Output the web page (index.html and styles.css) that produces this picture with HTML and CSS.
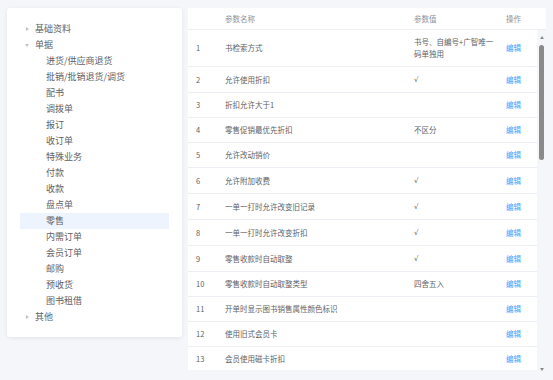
FILE: index.html
```html
<!DOCTYPE html>
<html lang="zh-CN">
<head>
<meta charset="utf-8">
<title>参数设置</title>
<link rel="stylesheet" href="styles.css">
</head>
<body>
<div class="page">
  <aside class="tree-card">
    <ul class="tree">
      <li class="node"><span class="arrow closed"></span><span class="label">基础资料</span></li>
      <li class="node"><span class="arrow open"></span><span class="label">单据</span></li>
      <li class="node child"><span class="arrow"></span><span class="label">进货/供应商退货</span></li>
      <li class="node child"><span class="arrow"></span><span class="label">批销/批销退货/调货</span></li>
      <li class="node child"><span class="arrow"></span><span class="label">配书</span></li>
      <li class="node child"><span class="arrow"></span><span class="label">调拨单</span></li>
      <li class="node child"><span class="arrow"></span><span class="label">报订</span></li>
      <li class="node child"><span class="arrow"></span><span class="label">收订单</span></li>
      <li class="node child"><span class="arrow"></span><span class="label">特殊业务</span></li>
      <li class="node child"><span class="arrow"></span><span class="label">付款</span></li>
      <li class="node child"><span class="arrow"></span><span class="label">收款</span></li>
      <li class="node child"><span class="arrow"></span><span class="label">盘点单</span></li>
      <li class="node child current"><span class="arrow"></span><span class="label">零售</span></li>
      <li class="node child"><span class="arrow"></span><span class="label">内需订单</span></li>
      <li class="node child"><span class="arrow"></span><span class="label">会员订单</span></li>
      <li class="node child"><span class="arrow"></span><span class="label">邮购</span></li>
      <li class="node child"><span class="arrow"></span><span class="label">预收货</span></li>
      <li class="node child"><span class="arrow"></span><span class="label">图书租借</span></li>
      <li class="node"><span class="arrow closed"></span><span class="label">其他</span></li>
    </ul>
  </aside>

  <section class="params">
    <table class="grid head">
      <colgroup><col class="c-idx"><col class="c-name"><col class="c-val"><col></colgroup>
      <thead>
        <tr><th></th><th>参数名称</th><th class="val">参数值</th><th class="op">操作</th></tr>
      </thead>
    </table>
    <div class="body-area">
      <div class="body-wrap">
        <table class="grid body">
          <colgroup><col class="c-idx"><col class="c-name"><col class="c-val"><col></colgroup>
          <tbody>
            <tr><td>1</td><td>书检索方式</td><td class="val">书号、自编号+广智唯一码单独用</td><td class="op"><a class="edit">编辑</a></td></tr>
            <tr><td>2</td><td>允许使用折扣</td><td class="val"><span class="check">√</span></td><td class="op"><a class="edit">编辑</a></td></tr>
            <tr><td>3</td><td>折扣允许大于1</td><td class="val"></td><td class="op"><a class="edit">编辑</a></td></tr>
            <tr><td>4</td><td>零售促销最优先折扣</td><td class="val">不区分</td><td class="op"><a class="edit">编辑</a></td></tr>
            <tr><td>5</td><td>允许改动销价</td><td class="val"></td><td class="op"><a class="edit">编辑</a></td></tr>
            <tr><td>6</td><td>允许附加收费</td><td class="val"><span class="check">√</span></td><td class="op"><a class="edit">编辑</a></td></tr>
            <tr><td>7</td><td>一单一打时允许改变旧记录</td><td class="val"><span class="check">√</span></td><td class="op"><a class="edit">编辑</a></td></tr>
            <tr><td>8</td><td>一单一打时允许改变折扣</td><td class="val"><span class="check">√</span></td><td class="op"><a class="edit">编辑</a></td></tr>
            <tr><td>9</td><td>零售收款时自动取整</td><td class="val"><span class="check">√</span></td><td class="op"><a class="edit">编辑</a></td></tr>
            <tr><td>10</td><td>零售收款时自动取整类型</td><td class="val">四舍五入</td><td class="op"><a class="edit">编辑</a></td></tr>
            <tr><td>11</td><td>开单时显示图书销售属性颜色标识</td><td class="val"></td><td class="op"><a class="edit">编辑</a></td></tr>
            <tr><td>12</td><td>使用旧式会员卡</td><td class="val"></td><td class="op"><a class="edit">编辑</a></td></tr>
            <tr><td>13</td><td>会员使用磁卡折扣</td><td class="val"></td><td class="op"><a class="edit">编辑</a></td></tr>
          </tbody>
        </table>
      </div>
      <div class="scrollbar" aria-hidden="true">
        <div class="sb-btn up"></div>
        <div class="sb-track"><div class="sb-thumb"></div></div>
        <div class="sb-btn down"></div>
      </div>
    </div>
  </section>
</div>
</body>
</html>
```

FILE: styles.css
```css
html, body {
  margin: 0;
  padding: 0;
}

body {
  background: #f4f6f9;
  font-family: "Noto Sans CJK SC", "Noto Sans", sans-serif;
  color: #606266;
}

.page {
  display: flex;
  align-items: flex-start;
  gap: 6px;
  padding: 8px 7px 0 7px;
  height: 380px;
  box-sizing: border-box;
}

/* ---------- tree ---------- */
.tree-card {
  flex: none;
  width: 175px;
  box-sizing: border-box;
  background: #fff;
  border-radius: 3px;
  box-shadow: 0 1px 4px rgba(0, 0, 0, 0.08);
  padding: 13px 13px 12px;
}

.tree {
  list-style: none;
  margin: 0;
  padding: 0;
}

.node {
  display: flex;
  align-items: center;
  height: 16px;
  font-size: 9px;
  line-height: 16px;
  color: #606266;
  white-space: nowrap;
}

.node.child {
  padding-left: 11px;
}

.node.current {
  background: #edf4fd;
}

.arrow {
  flex: none;
  width: 15px;
  height: 16px;
  position: relative;
}

.arrow.closed::before,
.arrow.open::before {
  content: "";
  position: absolute;
  width: 0;
  height: 0;
}

.arrow.closed::before {
  left: 6px;
  top: 6px;
  border-top: 2px solid transparent;
  border-bottom: 2px solid transparent;
  border-left: 3px solid #c0c4cc;
}

.arrow.open::before {
  left: 5px;
  top: 7px;
  border-left: 2px solid transparent;
  border-right: 2px solid transparent;
  border-top: 3px solid #c0c4cc;
}

/* ---------- params table ---------- */
.params {
  flex: none;
  width: 358px;
  display: flex;
  flex-direction: column;
}

.grid {
  border-collapse: collapse;
  table-layout: fixed;
  font-size: 7.5px;
}

.grid .c-idx { width: 29px; }
.grid .c-name { width: 189px; }
.grid .c-val { width: 98px; }

.grid.head {
  width: 358px;
  flex: none;
  background: #fff;
}

.grid.head th {
  height: 21px;
  padding: 0 8px;
  text-align: left;
  font-weight: normal;
  color: #909399;
  border-bottom: 1px solid #ebeef5;
  line-height: 12px;
}

.body-area {
  display: flex;
  height: 344px;
}

.body-wrap {
  flex: 1;
  min-width: 0;
  height: 340px;
  overflow: hidden;
}

.grid.body {
  width: 100%;
  background: #fff;
}

.grid.body td {
  padding: 6px 8px;
  line-height: 12px;
  border-bottom: 1px solid #ebeef5;
  vertical-align: middle;
  color: #606266;
}

.grid .val {
  padding-right: 0;
}

.grid.head th.op,
.grid.body td.op {
  padding-left: 2px;
  padding-right: 0;
}

.check {
  font-family: "DejaVu Sans", sans-serif;
  font-size: 7px;
}

.edit {
  color: #409eff;
  cursor: pointer;
}

/* ---------- drawn scrollbar ---------- */
.scrollbar {
  flex: none;
  width: 9px;
  display: flex;
  flex-direction: column;
  align-items: center;
}

.sb-btn {
  flex: none;
  width: 9px;
  display: flex;
  justify-content: center;
  align-items: center;
}

.sb-btn.up {
  height: 15px;
}

.sb-btn.down {
  height: 10px;
}

.sb-btn.up::before {
  content: "";
  border-left: 2px solid transparent;
  border-right: 2px solid transparent;
  border-bottom: 3px solid #8a8a8a;
}

.sb-btn.down::before {
  content: "";
  border-left: 2px solid transparent;
  border-right: 2px solid transparent;
  border-top: 3px solid #8a8a8a;
}

.sb-track {
  flex: 1;
  width: 9px;
  display: flex;
  justify-content: center;
}

.sb-thumb {
  width: 5px;
  height: 115px;
  border-radius: 3px;
  background: #8a8a8a;
}
```
